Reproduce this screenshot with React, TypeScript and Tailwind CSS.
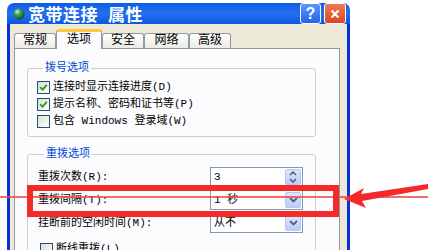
import React from 'react'

const Checkbox: React.FC<{ checked?: boolean }> = ({ checked }) => (
  <span className="flex h-[13px] w-[13px] shrink-0 items-center justify-center border border-[#1C5180] bg-gradient-to-br from-[#DCDCD5] to-white">
    {checked && (
      <svg viewBox="0 0 9 9" className="h-[9px] w-[9px]">
        <path d="M1.2 4.2 L3.6 6.6 L7.8 1.8" stroke="#21A121" strokeWidth="1.9" fill="none" />
      </svg>
    )}
  </span>
)

const ArrowBtn: React.FC<{ spin?: boolean }> = ({ spin }) => (
  <span className="flex h-full w-[16px] flex-col items-center justify-center rounded-[2px] border border-[#B4C8F6] bg-gradient-to-b from-[#DCE6FD] to-[#BACCF8]">
    {spin ? (
      <>
        <svg viewBox="0 0 8 5" className="h-[5px] w-[8px]">
          <path d="M1 4 L4 1 L7 4" stroke="#4D6185" strokeWidth="1.6" fill="none" />
        </svg>
        <svg viewBox="0 0 8 5" className="mt-[2px] h-[5px] w-[8px]">
          <path d="M1 1 L4 4 L7 1" stroke="#4D6185" strokeWidth="1.6" fill="none" />
        </svg>
      </>
    ) : (
      <svg viewBox="0 0 9 6" className="h-[6px] w-[9px]">
        <path d="M1 1 L4.5 4.5 L8 1" stroke="#4D6185" strokeWidth="1.8" fill="none" />
      </svg>
    )}
  </span>
)

const Field: React.FC<{ value: string; spin?: boolean }> = ({ value, spin }) => (
  <div className="flex h-[20px] w-[93px] items-center border border-[#7F9DB9] bg-white p-[1px] pl-[3px]">
    <span className="flex-1 text-[11px] leading-none text-black">{value}</span>
    <ArrowBtn spin={spin} />
  </div>
)

const tabs = [
  { label: '常规', w: 'w-[42px]' },
  { label: '选项', w: 'w-[46px]', active: true },
  { label: '安全', w: 'w-[42px]' },
  { label: '网络', w: 'w-[45px]' },
  { label: '高级', w: 'w-[42px]' },
]

const App: React.FC = () => {
  return (
    <div className="relative h-[250px] w-[428px] overflow-hidden bg-white pl-[7px] pt-[3px] font-['Liberation_Mono','Noto_Sans_CJK_SC',monospace]">
      <div className="flex h-[260px] w-[343px] flex-col">
        {/* title bar */}
        <div className="flex h-[28px] items-center rounded-t-[7px] bg-gradient-to-b from-[#0A5CE6] via-[#2470EE] to-[#0B57DE] pl-[6px] pr-[4px]">
          <svg viewBox="0 0 12 12" className="h-[12px] w-[12px]">
            <defs>
              <radialGradient id="g" cx="0.35" cy="0.3" r="0.75">
                <stop offset="0" stopColor="#D9F5E0" />
                <stop offset="0.35" stopColor="#3FA75A" />
                <stop offset="1" stopColor="#0B4A2A" />
              </radialGradient>
            </defs>
            <circle cx="6" cy="6" r="5.6" fill="url(#g)" />
          </svg>
          <div className="ml-[3px] flex gap-[10px] font-['Noto_Sans_CJK_SC',sans-serif] text-[17px] font-bold leading-none tracking-[0.5px] text-white">
            <span>宽带连接</span>
            <span>属性</span>
          </div>
          <div className="ml-auto flex gap-[3px]">
            <span className="flex h-[21px] w-[21px] items-center justify-center rounded-[3px] border border-white bg-gradient-to-b from-[#5A95FF] to-[#2762E6] font-['Liberation_Sans',sans-serif] text-[16px] font-bold leading-none text-white">
              ?
            </span>
            <span className="flex h-[21px] w-[22px] items-center justify-center rounded-[3px] border border-white bg-gradient-to-b from-[#EF7A55] to-[#D9461E]">
              <svg viewBox="0 0 10 10" className="h-[10px] w-[10px]">
                <path d="M1.5 1.5 L8.5 8.5 M8.5 1.5 L1.5 8.5" stroke="white" strokeWidth="2.2" />
              </svg>
            </span>
          </div>
        </div>

        {/* body */}
        <div className="flex flex-1 flex-col border-x-[3px] border-[#0831D9] bg-[#ECE9D8] pl-[4px] pr-[7px] pt-[5px]">
          <div className="relative z-10 flex h-[19px] items-end text-[12px] leading-none text-black">
            {tabs.map((t) =>
              t.active ? (
                <div
                  key={t.label}
                  className={`${t.w} -mb-px flex h-[20px] items-center justify-center rounded-t-[3px] border-x border-t-[3px] border-x-[#919B9C] border-t-[#FFC83C] bg-[#FCFCFE] pb-[2px]`}
                >
                  {t.label}
                </div>
              ) : (
                <div
                  key={t.label}
                  className={`${t.w} flex h-[15px] items-center justify-center rounded-t-[3px] border-x border-t border-[#919B9C] bg-gradient-to-b from-white to-[#ECEBE5]`}
                >
                  {t.label}
                </div>
              ),
            )}
          </div>

          <div className="flex-1 border border-[#919B9C] bg-[#FCFCFE] pl-[12px] pt-[12px] text-[11px] text-black">
            <fieldset className="w-[289px] rounded-[3px] border border-[#D0D0BF] pb-[6px] pl-[9px]">
              <legend className="ml-[6px] h-[14px] px-[2px] leading-[14px] text-[#0046D5]">拨号选项</legend>
              <div className="pt-[4px]">
                <div className="flex h-[17px] items-center gap-[3px]">
                  <Checkbox checked />
                  <span>连接时显示连接进度(D)</span>
                </div>
                <div className="flex h-[17px] items-center gap-[3px]">
                  <Checkbox checked />
                  <span>提示名称、密码和证书等(P)</span>
                </div>
                <div className="flex h-[17px] items-center gap-[3px]">
                  <Checkbox />
                  <span>包含 Windows 登录域(W)</span>
                </div>
              </div>
            </fieldset>

            <fieldset className="mt-[10px] w-[289px] rounded-[3px] border border-[#D0D0BF] pb-[8px] pl-[10px] pr-[12px]">
              <legend className="ml-[6px] h-[14px] px-[2px] leading-[14px] text-[#0046D5]">重拨选项</legend>
              <div className="flex flex-col gap-[3px] pt-[6px]">
                <div className="flex items-center justify-between">
                  <span>重拨次数(R):</span>
                  <Field value="3" spin />
                </div>
                <div className="flex items-center justify-between">
                  <span>重拨间隔(T):</span>
                  <Field value="1 秒" />
                </div>
                <div className="flex items-center justify-between">
                  <span>挂断前的空闲时间(M):</span>
                  <Field value="从不" />
                </div>
                <div className="mt-[5px] flex h-[17px] items-center gap-[3px] pl-[2px]">
                  <Checkbox />
                  <span>断线重拨(L)</span>
                </div>
              </div>
            </fieldset>
          </div>
        </div>
      </div>

      {/* annotation overlays */}
      <div className="absolute left-0 top-[196px] h-[2px] w-[428px] bg-[#EE4A4A]/80" />
      <div className="absolute left-[27px] top-[185px] h-[32px] w-[312px] border-[6px] border-[#F42A2A]" />
      <svg viewBox="0 0 428 250" className="absolute left-0 top-0 h-[250px] w-[428px]">
        <polygon
          points="344,199 364,188 361,194 428,184 428,189 362,201 366,208"
          fill="#F42A2A"
        />
      </svg>
    </div>
  )
}

export default App
